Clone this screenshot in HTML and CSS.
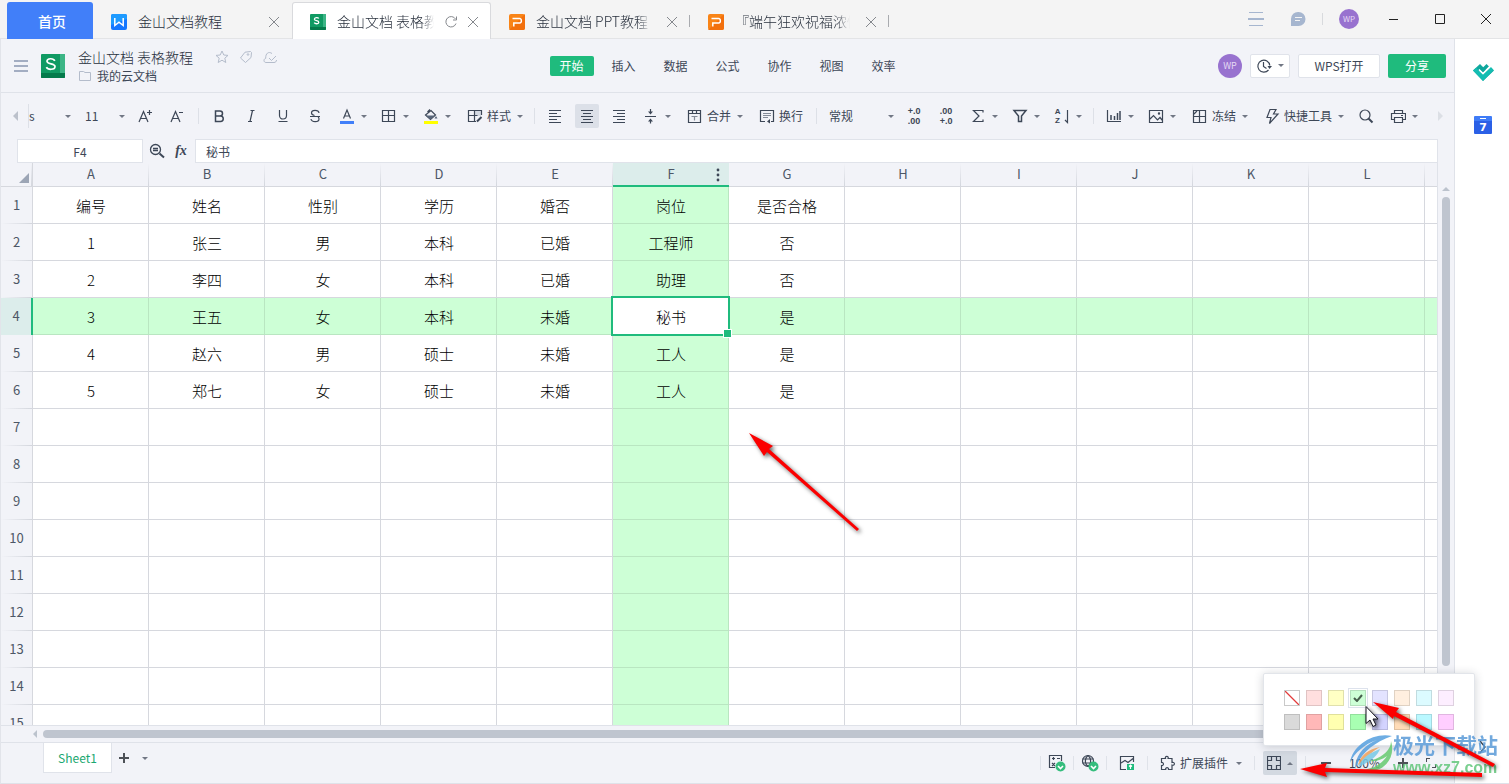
FILE: index.html
```html
<!DOCTYPE html>
<html lang="zh-CN">
<head>
<meta charset="utf-8">
<title>金山文档 表格教程</title>
<link rel="stylesheet" href="styles.css">
</head>
<body>
<header class="tabbar">
  <button class="home">首页</button>
  <nav class="tabs">
    <div class="tab">
      <svg class="logo" viewBox="0 0 16 16"><rect width="16" height="16" rx="2" fill="#1677ff"/><path d="M0 2a2 2 0 0 1 2-2h12a2 2 0 0 1 2 2v3L0 11z" fill="#1e9bff"/><path d="M3.800 4v7.500L8 8.200l4.200 3.300V4" fill="none" stroke="#fff" stroke-width="1.500"/></svg>
      <span class="tab-label">金山文档教程</span>
      <button class="x" aria-label="关闭"><svg viewBox="0 0 10 10"><path d="M0 0l10 10M10 0L0 10"/></svg></button>
    </div>
    <div class="tab active">
      <svg class="logo" viewBox="0 0 16 16"><rect width="16" height="16" rx="1" fill="#109a63"/><path d="M13 0h2a1 1 0 0 1 1 1v12h-3z" fill="#3cb586"/><path d="M0 13h16v2a1 1 0 0 1-1 1H1a1 1 0 0 1-1-1z" fill="#047a4b"/><path d="M8.800 4.500C8 3.300 4.400 3.300 4.400 5.200c0 2 4.400 1 4.400 3 0 2-3.600 2-4.600.5" fill="none" stroke="#fff" stroke-width="1.300"/></svg>
      <span class="tab-label fade">金山文档 表格教程</span>
      <button class="x" aria-label="刷新"><svg class="refresh" viewBox="0 0 12 12"><path d="M11 7.500A5.200 5.200 0 1 1 10.500 3M11.500.5v3.500H8"/></svg></button>
      <button class="x" aria-label="关闭"><svg viewBox="0 0 10 10"><path d="M0 0l10 10M10 0L0 10"/></svg></button>
    </div>
    <div class="tab split">
      <svg class="logo" viewBox="0 0 16 16"><rect width="16" height="16" rx="2" fill="#f98416"/><path d="M0 16L16 0v14a2 2 0 0 1-2 2z" fill="#f2700d"/><path d="M3.500 4.500h7a1.800 1.800 0 0 1 1.800 1.800v1.200a1.500 1.500 0 0 1-1.500 1.500H4.800v3.500" fill="none" stroke="#fff" stroke-width="1.500"/></svg>
      <span class="tab-label fade">金山文档 PPT教程</span>
      <button class="x" aria-label="关闭"><svg viewBox="0 0 10 10"><path d="M0 0l10 10M10 0L0 10"/></svg></button>
    </div>
    <div class="tab split">
      <svg class="logo" viewBox="0 0 16 16"><rect width="16" height="16" rx="2" fill="#f98416"/><path d="M0 16L16 0v14a2 2 0 0 1-2 2z" fill="#f2700d"/><path d="M3.500 4.500h7a1.800 1.800 0 0 1 1.800 1.800v1.200a1.500 1.500 0 0 1-1.500 1.500H4.800v3.500" fill="none" stroke="#fff" stroke-width="1.500"/></svg>
      <span class="tab-label fade">『端午狂欢祝福浓情</span>
      <button class="x" aria-label="关闭"><svg viewBox="0 0 10 10"><path d="M0 0l10 10M10 0L0 10"/></svg></button>
    </div>
  </nav>
  <div class="window-tools">
    <button aria-label="列表"><svg width="16" height="16" viewBox="0 0 16 16" fill="#a6b6cf"><path d="M1 1h14v1H1zM0 7h16v2H0zM1 14h14v1H1z"/></svg></button>
    <button class="chat" aria-label="消息"><svg width="16" height="16" viewBox="0 0 16 16"><path d="M8.500 1a6.700 6.700 0 1 1 0 14H1V8a7 7 0 0 1 7.500-7z" fill="#a6b6cf"/><path d="M5 6.500h7M5 9.500h5" stroke="#f4f4f4"/></svg></button>
    <i class="thin-line"></i>
    <span class="avatar small">WP</span>
    <div class="window-buttons">
      <button aria-label="最小化"><svg width="12" height="12" viewBox="0 0 12 12"><path d="M1 6.500h9"/></svg></button>
      <button aria-label="最大化"><svg width="12" height="12" viewBox="0 0 12 12"><path d="M1.500 1.500h9v9h-9z"/></svg></button>
      <button aria-label="关闭窗口"><svg width="12" height="12" viewBox="0 0 12 12"><path d="M1 1l10 10M11 1L1 11"/></svg></button>
    </div>
  </div>
</header>

<div class="workspace">
<main class="app">
  <div class="doc-header">
    <div class="doc-left">
      <button class="burger" aria-label="菜单"><svg width="14" height="12" viewBox="0 0 14 12" fill="#a3adc2"><path d="M0 0h14v2H0zM0 5h14v2H0zM0 10h14v2H0z"/></svg></button>
      <svg width="24" height="24" viewBox="0 0 24 24"><rect width="24" height="24" rx="1" fill="#109a63"/><path d="M19 0h4a1 1 0 0 1 1 1v19h-5z" fill="#3cb586"/><path d="M0 19h24v4a1 1 0 0 1-1 1H1a1 1 0 0 1-1-1z" fill="#047a4b"/><path d="M13.800 6.800C12.600 4 6 4 6 7.300c0 3.400 8 1.700 8 5.200 0 3.600-7.200 3.600-8.600.6" fill="none" stroke="#fff" stroke-width="1.700"/></svg>
      <div class="doc-names">
        <div class="doc-title"><span>金山文档 表格教程</span>
          <span class="doc-marks">
            <svg width="14" height="14" viewBox="0 0 14 14"><path d="M7 1l1.800 4 4.200.4-3.200 2.800 1 4.300L7 10.200l-3.800 2.300 1-4.300L1 5.400 5.200 5z"/></svg>
            <svg width="14" height="14" viewBox="0 0 14 14"><path d="M1.500 8L6 2.200l5.500-.7 1 1L12 7.500 6.500 12.500z"/><circle cx="9" cy="4.500" r=".8"/></svg>
            <svg width="14" height="14" viewBox="0 0 14 14"><path d="M13.500 10c0 1.500-1 2.500-2.500 2.500H3C.5 12.500.3 9 2.700 8.300 2.500 3.500 5.500 1 9 3.500M6 8l2.500 2.500L13 6"/></svg>
          </span>
        </div>
        <div class="doc-path"><svg width="12" height="12" viewBox="0 0 12 12"><path d="M.5 1.500h4l1.500 1h5.500v8H.5z"/></svg><span>我的云文档</span></div>
      </div>
    </div>
    <nav class="menu">
      <button class="on">开始</button><button>插入</button><button>数据</button><button>公式</button><button>协作</button><button>视图</button><button>效率</button>
    </nav>
    <div class="doc-right">
      <span class="avatar">WP</span>
      <button class="box history" aria-label="历史记录"><svg width="16" height="16" viewBox="0 0 16 16"><path d="M12.500 12A6 6 0 1 1 13.800 7.500M7.500 4v4.500l3 2"/><path d="M11.500 8h4.500l-2.500 3z" fill="#3d4757" stroke="none"/></svg><i class="caret"></i></button>
      <button class="box open">WPS打开</button>
      <button class="share">分享</button>
    </div>
  </div>

  <div class="toolbar">
    <button class="nudge" aria-label="向左"><svg width="5" height="10" viewBox="0 0 5 10"><path d="M5 0v10L0 5z" fill="#bcc1cb"/></svg></button>
    <label class="pick font"><select aria-label="字体"><option>s</option></select><i class="caret"></i></label>
    <label class="pick size"><select aria-label="字号"><option>11</option></select><i class="caret"></i></label>
    <button class="tool" aria-label="增大字号"><svg viewBox="0 0 16 16"><path d="M2 14L6.500 3.500 11 14M3.500 10.500h6M10 4.500h5M12.500 2v5"/></svg></button>
    <button class="tool" aria-label="减小字号"><svg viewBox="0 0 16 16"><path d="M2 14L6.500 3.500 11 14M3.500 10.500h6M10 4.500h4"/></svg></button>
    <i class="sep"></i>
    <button class="tool" aria-label="加粗"><svg viewBox="0 0 16 16"><path d="M4.500 3h4.500a2.300 2.300 0 0 1 0 5H4.500zM4.500 8h5a2.600 2.600 0 0 1 0 5.500h-5z" stroke-width="1.500"/></svg></button>
    <button class="tool" aria-label="斜体"><svg viewBox="0 0 16 16"><path d="M7.500 2.500h4M5 13.500h4M9.500 2.500l-2.500 11"/></svg></button>
    <button class="tool" aria-label="下划线"><svg viewBox="0 0 16 16"><path d="M4.500 2v5.500a3.500 3.500 0 0 0 7 0V2M3.500 13.500h9"/></svg></button>
    <button class="tool" aria-label="删除线"><svg viewBox="0 0 16 16"><path d="M12 5C11.500 1.500 4.500 1.500 4.500 5c0 1.500 1 2 3 2.500M3 8.500h10M4 11c.5 3.500 8 3.500 8 0 0-1-.3-1.600-1-2"/></svg></button>
    <button class="tool" aria-label="字体颜色"><svg viewBox="0 0 16 16"><path d="M4.500 10.500L8 2l3.500 8.500M5.500 8h5"/><path d="M1 13h14v3H1z" fill="#417ff9" stroke="none"/></svg><i class="caret"></i></button>
    <button class="tool" aria-label="边框"><svg viewBox="0 0 16 16"><path d="M1.500 2.500h12v11h-12zM7.500 2.500v11M1.500 7.500h12"/></svg><i class="caret"></i></button>
    <button class="tool" aria-label="填充颜色"><svg viewBox="0 0 16 16"><path d="M2.500 7L8 2.500 12.500 7 7.500 11.500zM4.500 4L7 1.500"/><path d="M3 7.500h9L7.500 11.500zM13 8l1.500 2.500h-3z" fill="#59667a" stroke="none"/><path d="M1 13h14v3H1z" fill="#ffff00" stroke="none"/></svg><i class="caret"></i></button>
    <button class="tool labeled"><svg viewBox="0 0 16 16"><path d="M8 2h6v6H8z" fill="#d5dae3" stroke="none"/><path d="M14.500 7V2.500h-13v11H9M7.500 2.500v11M1.500 7.500h9"/><path d="M10 13.500L14.500 9" stroke-width="2"/></svg>样式<i class="caret"></i></button>
    <i class="sep"></i>
    <button class="tool" aria-label="左对齐"><svg viewBox="0 0 16 16"><path d="M2 2.500h12M2 5.500h8M2 8.500h12M2 11.500h8M2 14.500h12"/></svg></button>
    <button class="tool pressed" aria-label="居中"><svg viewBox="0 0 16 16"><path d="M2 2.500h12M4 5.500h8M2 8.500h12M4 11.500h8M2 14.500h12"/></svg></button>
    <button class="tool" aria-label="右对齐"><svg viewBox="0 0 16 16"><path d="M2 2.500h12M6 5.500h8M2 8.500h12M6 11.500h8M2 14.500h12"/></svg></button>
    <button class="tool" aria-label="垂直对齐"><svg viewBox="0 0 16 16"><path d="M2 8.500h11M7.500 1v4M7.500 12v3.500"/><path d="M5 3.500h5L7.500 6.500zM5 13.500h5L7.500 10.500z" fill="#3d4757" stroke="none"/></svg><i class="caret"></i></button>
    <button class="tool labeled"><svg viewBox="0 0 16 16"><path d="M1.500 2.500h12v12h-12zM1.500 5.500h12M5.500 2.500v3M9.500 2.500v3"/><path d="M4.500 8.500h6M7.500 8.500v4" stroke="#848b98"/></svg>合并<i class="caret"></i></button>
    <button class="tool labeled"><svg viewBox="0 0 16 16"><path d="M6 13.500H1.500v-11h13v11H12"/><path d="M4 5.500h8M4 7.500h8M4 9.500h5" stroke="#848b98"/><path d="M11 11v4.500l-3-2z" fill="#3d4757" stroke="none"/></svg>换行</button>
    <i class="sep"></i>
    <label class="pick number"><select aria-label="数字格式"><option>常规</option></select><i class="caret"></i></label>
    <button class="tool digits" aria-label="增加小数位"><span>+.0</span><span>.00</span></button>
    <button class="tool digits" aria-label="减少小数位"><span>.00</span><span>+.0</span></button>
    <button class="tool" aria-label="求和"><svg viewBox="0 0 16 16"><path d="M13 4.500v-2H3.500L9 8l-5.500 5.500H13v-2"/></svg><i class="caret"></i></button>
    <button class="tool" aria-label="筛选"><svg viewBox="0 0 16 16"><path d="M2 2.500h12L9.500 8v5.500h-3V8z" stroke-width="1.500"/></svg><i class="caret"></i></button>
    <button class="tool sort" aria-label="排序"><span class="az"><span>A</span><span>Z</span></span><svg viewBox="0 0 6 16"><path d="M3.500 2v12.500L1 12"/></svg><i class="caret"></i></button>
    <i class="sep"></i>
    <button class="tool" aria-label="图表"><svg viewBox="0 0 16 16"><path d="M1.500 2v11.500H15"/><path d="M5 7v5M8.500 8v4M11.500 5v7M14 3v9" stroke-width="1.500"/></svg><i class="caret"></i></button>
    <button class="tool" aria-label="图片"><svg viewBox="0 0 16 16"><path d="M1.500 2.500h13v12h-13zM2 11l3.500-3.500 4 4.500 2.500-2.500 2.500 3"/><circle cx="11" cy="5.500" r=".6"/></svg><i class="caret"></i></button>
    <button class="tool labeled"><svg viewBox="0 0 16 16"><path d="M1.500 2.500h12v12h-12zM7.500 2.500v12M1.500 8.500h12M2 6l3-3"/></svg>冻结<i class="caret"></i></button>
    <button class="tool labeled"><svg viewBox="0 0 16 16"><path d="M6 1.500h6L9.500 6H14L5.500 15.500l1.500-6H3z"/></svg>快捷工具<i class="caret"></i></button>
    <button class="tool" aria-label="查找"><svg viewBox="0 0 16 16"><circle cx="7" cy="7" r="5"/><path d="M10.500 10.500l4 4" stroke-width="2"/></svg></button>
    <button class="tool" aria-label="打印"><svg viewBox="0 0 16 16"><path d="M4.500 5.500v-3h8v3M4.500 11.500h-3v-6h14v6h-3M4.500 9.500h8v5h-8zM11 7.500h2"/></svg><i class="caret"></i></button>
    <button class="nudge end" aria-label="向右"><svg width="5" height="10" viewBox="0 0 5 10"><path d="M0 0v10l5-5z" fill="#dcdfe5"/></svg></button>
  </div>

  <div class="formula-bar">
    <input class="name-box" aria-label="名称框" value="F4">
    <button aria-label="浏览"><svg width="16" height="16" viewBox="0 0 16 16" fill="none" stroke="#3d4757" stroke-width="1.300"><circle cx="6.500" cy="6.500" r="5"/><path d="M4 5.500h5M4 7.500h5"/><path d="M10.500 10.500l4.500 4" stroke-width="2"/></svg></button>
    <button class="fx" aria-label="插入函数"><i>fx</i></button>
    <input class="formula" aria-label="编辑栏" value="秘书">
  </div>

  <div class="sheet">
    <div class="grid">
      <table>
        <colgroup><col class="c-index"><col span="13" class="c-data"></colgroup>
        <thead><tr><th class="corner"><svg width="10" height="10" viewBox="0 0 10 10"><path d="M10 0v10H0z" fill="#9ca5b5"/></svg></th><th>A</th><th>B</th><th>C</th><th>D</th><th>E</th><th class="hot">F<svg class="dots" width="4" height="14" viewBox="0 0 4 14" fill="#3d4757"><circle cx="2" cy="2" r="1.400"/><circle cx="2" cy="7" r="1.400"/><circle cx="2" cy="12" r="1.400"/></svg></th><th>G</th><th>H</th><th>I</th><th>J</th><th>K</th><th>L</th><th></th></tr></thead>
        <tbody>
          <tr><th>1</th><td>编号</td><td>姓名</td><td>性别</td><td>学历</td><td>婚否</td><td>岗位</td><td>是否合格</td><td></td><td></td><td></td><td></td><td></td><td></td></tr>
          <tr><th>2</th><td>1</td><td>张三</td><td>男</td><td>本科</td><td>已婚</td><td>工程师</td><td>否</td><td></td><td></td><td></td><td></td><td></td><td></td></tr>
          <tr><th>3</th><td>2</td><td>李四</td><td>女</td><td>本科</td><td>已婚</td><td>助理</td><td>否</td><td></td><td></td><td></td><td></td><td></td><td></td></tr>
          <tr class="current"><th>4</th><td>3</td><td>王五</td><td>女</td><td>本科</td><td>未婚</td><td class="selected">秘书</td><td>是</td><td></td><td></td><td></td><td></td><td></td><td></td></tr>
          <tr><th>5</th><td>4</td><td>赵六</td><td>男</td><td>硕士</td><td>未婚</td><td>工人</td><td>是</td><td></td><td></td><td></td><td></td><td></td><td></td></tr>
          <tr><th>6</th><td>5</td><td>郑七</td><td>女</td><td>硕士</td><td>未婚</td><td>工人</td><td>是</td><td></td><td></td><td></td><td></td><td></td><td></td></tr>
          <tr><th>7</th><td></td><td></td><td></td><td></td><td></td><td></td><td></td><td></td><td></td><td></td><td></td><td></td><td></td></tr>
          <tr><th>8</th><td></td><td></td><td></td><td></td><td></td><td></td><td></td><td></td><td></td><td></td><td></td><td></td><td></td></tr>
          <tr><th>9</th><td></td><td></td><td></td><td></td><td></td><td></td><td></td><td></td><td></td><td></td><td></td><td></td><td></td></tr>
          <tr><th>10</th><td></td><td></td><td></td><td></td><td></td><td></td><td></td><td></td><td></td><td></td><td></td><td></td><td></td></tr>
          <tr><th>11</th><td></td><td></td><td></td><td></td><td></td><td></td><td></td><td></td><td></td><td></td><td></td><td></td><td></td></tr>
          <tr><th>12</th><td></td><td></td><td></td><td></td><td></td><td></td><td></td><td></td><td></td><td></td><td></td><td></td><td></td></tr>
          <tr><th>13</th><td></td><td></td><td></td><td></td><td></td><td></td><td></td><td></td><td></td><td></td><td></td><td></td><td></td></tr>
          <tr><th>14</th><td></td><td></td><td></td><td></td><td></td><td></td><td></td><td></td><td></td><td></td><td></td><td></td><td></td></tr>
          <tr><th>15</th><td></td><td></td><td></td><td></td><td></td><td></td><td></td><td></td><td></td><td></td><td></td><td></td><td></td></tr>
        </tbody>
      </table>
      <svg class="mark mark-column" width="130" height="120" viewBox="740 425 130 120"><path d="M749 433l24 13-4 3 90 80-2 2-90-79-3 4z"/></svg>
    </div>
    <div class="vscroll"><svg width="8" height="4" viewBox="0 0 8 4"><path d="M0 4h8L4 0z" fill="#bcc3cd"/></svg><i></i></div>
  </div>

  <div class="hscroll"><svg width="4" height="8" viewBox="0 0 4 8"><path d="M4 0v8L0 4z" fill="#bcc3cd"/></svg><i></i></div>

  <footer class="footer">
    <button class="sheet-tab">Sheet1</button>
    <button class="add" aria-label="新建工作表"><svg width="10" height="10" viewBox="0 0 10 10"><path d="M4 0h2v10H4zM0 4h10v2H0z" fill="#4d5157"/></svg></button>
    <button class="more" aria-label="更多工作表"><i class="caret"></i></button>
    <div class="status">
      <i class="bar"></i>
      <button class="status-icon" aria-label="校对"><svg viewBox="0 0 18 18"><path d="M7 13.500H1.500v-12h12V7M4 4.500h3M5.500 3v3M9 4.500h3M4 9l3 3M7 9l-3 3"/><circle cx="12.500" cy="12.500" r="5" fill="#35bd7d" stroke="none"/><path d="M10 12l2.500 2.500L15 12" stroke="#fff" stroke-width="1.600"/></svg></button>
      <i class="bar"></i>
      <button class="status-icon" aria-label="网络"><svg viewBox="0 0 18 18"><circle cx="7" cy="7" r="5.500"/><path d="M7 1.500C3.500 4 3.500 10 7 12.500M7 1.500c3.500 2.500 3.500 8.500 0 11M1.500 5h11M1.500 9h11"/><circle cx="12.500" cy="12.500" r="5" fill="#35bd7d" stroke="none"/><path d="M10 12l2.500 2.500L15 12" stroke="#fff" stroke-width="1.600"/></svg></button>
      <i class="bar"></i>
      <button class="status-icon wide" aria-label="图片压缩"><svg viewBox="0 0 18 18"><path d="M8 15.500H2.500v-13h13V8M3 9l4-2.500 3 2 5-4"/><path d="M9 10h7v6H9z" fill="#1fbb7d" stroke="none"/><path d="M12.500 11v4M11 12.500l1.500-1.500 1.500 1.500" stroke="#fff"/></svg></button>
      <i class="bar"></i>
      <button class="plugin"><svg width="16" height="16" viewBox="0 0 16 16"><path d="M1.500 3.500h4c-1-2.800 3.600-2.800 2.600 0h3.900v4c3.200-1 3.200 3.600 0 2.600v4.400H8.500c.6-2.600-3.400-2.600-2.800 0H1.500v-4c2.600.5 2.600-3.500 0-3z"/></svg>扩展插件<i class="caret"></i></button>
      <i class="bar"></i>
      <div class="reading">
        <button class="reading-button" aria-label="阅读模式"><svg width="14" height="14" viewBox="0 0 14 14"><path d="M.5.500h13v13H.5zM.5 4.500h4v-4M9.500.5v4h4M.5 9.500h4v4M9.500 13.500v-4h4"/></svg><i class="caret up"></i></button>
        <div class="palette" role="group" aria-label="高亮颜色">
          <button class="sw none" aria-label="无"></button><button class="sw pink"></button><button class="sw yellow"></button><button class="sw green chosen" aria-label="绿色"><svg width="10" height="8" viewBox="0 0 10 8"><path d="M1 4l3 3 5-6" fill="none" stroke="#47604d" stroke-width="2"/></svg></button><button class="sw violet"></button><button class="sw peach"></button><button class="sw cyan"></button><button class="sw lilac"></button>
          <button class="sw gray"></button><button class="sw pink2"></button><button class="sw yellow2"></button><button class="sw green2"></button><button class="sw violet2"></button><button class="sw peach2"></button><button class="sw cyan2"></button><button class="sw lilac2"></button>
        </div>
      </div>
      <i class="bar"></i>
      <div class="zoom">
        <button aria-label="缩小"><svg width="10" height="10" viewBox="0 0 10 10"><path d="M0 4h10v2H0z"/></svg></button>
        <span>100%</span>
        <button aria-label="放大"><svg width="10" height="10" viewBox="0 0 10 10"><path d="M4 0h2v10H4zM0 4h10v2H0z"/></svg></button>
        <button aria-label="全屏"><svg width="10" height="10" viewBox="0 0 10 10"><path d="M0 0h4v1H1v3H0zM10 10H6V9h3V6h1z"/></svg></button>
      </div>
    </div>
  </footer>
</main>

<aside class="side">
  <button aria-label="待办"><svg width="22" height="20" viewBox="0 0 22 20"><path d="M1 8.500L8 2l6 6-3 3-3-3-1.500 1.500L11 14l8.500-8L22 8.500 11 19z" fill="#0fa79d"/><path d="M1 8.500l3-2.800 7 6.800 8-7.500 2.500 3L11 19z" fill="#14bdb2"/><path d="M11 5.500L14.500 2l2.500 2.500-6 6-2.500-2.500z" fill="#0fa79d"/><path d="M7 7.500l4 4 6.500-6.500" fill="none" stroke="#fff" stroke-width="1.500"/></svg></button>
  <button class="calendar" aria-label="日历">7</button>
  <button class="expand" aria-label="展开"><svg width="8" height="14" viewBox="0 0 8 14"><path d="M1 1l5 6-5 6" fill="none" stroke="#3d4757" stroke-width="1.500"/></svg></button>
</aside>
</div>

<div class="stamp">
  <svg width="44" height="42" viewBox="0 0 44 42"><path d="M43 2C25-2 3 11 1 29c4-10 16-20 27-23C15 11 6 22 6 35c5-14 17-26 37-33z" fill="#559fdf"/><path d="M13 36c18 6 35-10 29-29 0 10-11 18-23 20 7 1 14-1 19-5-5 8-14 13-25 14z" fill="#66ca70"/><path d="M9 31c2-9 10-16 22-18-7 4-13 9-17 16z" fill="#f0a05a"/><path d="M9 33c3-8 11-14 22-18-3 8-12 14-22 18z" fill="#77c9e6"/></svg>
  <div><b>极光下载站</b><span>www.xz7.com</span></div>
</div>
<svg class="mark mark-corner" width="219" height="94" viewBox="1290 690 219 94">
  <path d="M1373 702l26 6-3 4 99 52-2 3-99-51-1 3z"/>
  <path d="M1300 769l27-6-2 5 157 5v4l-157-5 2 5z"/>
  <path class="cursor" d="M1366 706.500v17l4-3.500 3 6.500 3-1.500-3-6h5z"/>
</svg>
</body>
</html>
```
FILE: styles.css
```css
* { box-sizing: border-box; }

body {
  margin: 0;
  height: 100vh;
  display: flex;
  flex-direction: column;
  position: relative;
  overflow: hidden;
  background: #f2f3f8;
  color: #3d4757;
  font: 400 12px/16px "Noto Sans CJK SC", "Noto Sans", sans-serif;
}

button, input, select {
  font: inherit;
  color: inherit;
  border: 0;
  padding: 0;
  margin: 0;
  background: none;
  border-radius: 0;
  appearance: none;
}
button { display: flex; align-items: center; justify-content: center; flex: none; white-space: nowrap; }
svg { display: block; flex: none; }

.caret {
  flex: none;
  width: 0;
  height: 0;
  border: 3px solid transparent;
  border-top-color: #717784;
  border-bottom-width: 0;
}
.caret.up { border-top-width: 0; border-bottom: 3px solid #717784; }

/* window tabs */
.tabbar {
  flex: none;
  display: flex;
  height: 39px;
  padding: 2px 0 0 7px;
  background: #f4f4f4;
  border-bottom: 1px solid #e3e4e6;
}
.home {
  width: 86px;
  height: 37px;
  border-radius: 3px 3px 0 0;
  background: #417ff9;
  color: #fff;
  font-size: 14px;
  font-weight: 500;
  padding-left: 4px;
}
.tabs { display: flex; flex: 1; min-width: 0; }
.tab {
  flex: 0 1 199px;
  min-width: 0;
  height: 37px;
  display: flex;
  align-items: center;
  gap: 11px;
  padding: 2px 13px 0 18px;
  position: relative;
}
.tab.active {
  background: #fff;
  border: 1px solid #d9dadd;
  border-bottom: 0;
  border-radius: 3px 3px 0 0;
  padding: 1px 12px 0 17px;
}
.tab.split::after {
  content: "";
  position: absolute;
  right: 0;
  top: 13px;
  width: 1px;
  height: 12px;
  background: #a9abaf;
}
.logo { width: 16px; height: 16px; }
.tab-label {
  flex: 1;
  min-width: 0;
  overflow: hidden;
  white-space: nowrap;
  font-size: 14px;
  font-weight: 300;
  line-height: 20px;
  color: #28303d;
  margin: 0 5px 2px 0;
}
.active .tab-label { margin-right: 0; }
.fade { mask-image: linear-gradient(to right, #000 88%, transparent); }
.x svg { width: 10px; height: 10px; overflow: visible; fill: none; stroke: #85888d; }
.x .refresh { width: 12px; height: 12px; }

.window-tools { display: flex; align-items: center; height: 33px; }
.chat { margin: 0 16px 0 26px; }
.thin-line { width: 1px; height: 12px; margin-right: 16px; background: #d8dadd; }
.avatar {
  width: 24px;
  height: 24px;
  border-radius: 50%;
  background: #9872cf;
  color: #e4d9f4;
  font-size: 9px;
  line-height: 23px;
  text-align: center;
}
.avatar.small { width: 20px; height: 20px; font-size: 8px; line-height: 19px; margin-right: 12px; }
.window-buttons { display: flex; }
.window-buttons button { width: 46px; height: 33px; }
.window-buttons svg { fill: none; stroke: #222; }

.workspace { flex: 1; min-height: 0; display: flex; }
.app {
  flex: 1;
  min-width: 0;
  display: flex;
  flex-direction: column;
  border-left: 1px solid #e2e4ea;
  position: relative;
  z-index: 1;
}

/* document header */
.doc-header {
  flex: none;
  height: 54px;
  display: grid;
  grid-template-columns: 1fr auto 1fr;
  align-items: center;
  padding: 0 8px 0 13px;
  border-bottom: 1px solid #dfe2e9;
}
.doc-left { display: flex; align-items: center; gap: 13px; }
.doc-names { display: flex; flex-direction: column; gap: 1px; padding-bottom: 1px; }
.doc-title { display: flex; align-items: center; font-size: 14px; line-height: 20px; }
.doc-title > span:first-child { font-weight: 300; color: #28303d; }
.doc-marks { display: flex; gap: 10px; margin-left: 22px; }
.doc-marks svg, .doc-path svg { fill: none; stroke: #b4bccb; }
.doc-path { display: flex; align-items: center; gap: 6px; padding-left: 1px; }
.menu { display: flex; gap: 8px; margin-right: 5px; }
.menu button { width: 44px; height: 20px; border-radius: 2px; }
.menu .on { background: #1fbb7d; color: #fff; }
.doc-right { display: flex; justify-content: flex-end; align-items: center; gap: 8px; }
.box { height: 24px; background: #fff; border: 1px solid #e0e3ea; border-radius: 2px; }
.history { width: 40px; gap: 6px; }
.history svg { fill: none; stroke: #3d4757; stroke-width: 1.2; }
.open { width: 82px; }
.share { width: 58px; height: 24px; border-radius: 2px; background: #1fbb7d; color: #fff; }

/* toolbar */
.toolbar {
  flex: none;
  height: 46px;
  display: flex;
  align-items: center;
  gap: 8px;
  padding: 0 11px 0 12px;
}
.tool { height: 24px; min-width: 24px; padding: 0 4px; gap: 4px; border-radius: 2px; }
.tool svg { width: 16px; height: 16px; fill: none; stroke: #3d4757; stroke-width: 1.2; }
.tool .caret { margin: 0 -2px 0 2px; }
.labeled { margin-left: 2px; }
.pressed { background: #dce0e8; }
.sep { flex: none; width: 1px; height: 16px; margin-left: 1px; background: #dde0e7; }
.pick { display: flex; align-items: center; height: 24px; }
.pick select { flex: 1; min-width: 0; width: 0; height: 24px; }
.font { width: 43px; margin-left: 2px; border-left: 1px solid #dde0e7; }
.size { width: 46px; padding-left: 6px; }
.number { width: 69px; padding-left: 4px; }
.digits { flex-direction: column; padding: 0; gap: 0; font: 700 9px/10px "Liberation Sans", sans-serif; }
.sort { gap: 3px; }
.az { display: flex; flex-direction: column; width: 7px; font: 700 8px/9px "Liberation Sans", sans-serif; }
.sort svg { width: 6px; }
.sort .caret { margin-left: 3px; }
.nudge { height: 24px; }
.nudge.end { margin-left: auto; }

/* formula bar */
.formula-bar { flex: none; height: 24px; display: flex; padding: 0 16px; }
.formula-bar input { height: 24px; background: #fff; border: 1px solid #e0e3ea; }
.name-box { width: 126px; text-align: center; }
.formula-bar button { width: 16px; margin-left: 6px; }
.formula-bar .fx { margin: 0 6px 0 8px; font: italic 700 14px/20px "Liberation Serif", serif; }
.formula-bar .formula { flex: 1; min-width: 0; padding: 0 10px; }

/* grid */
.sheet { flex: 1; min-height: 0; display: flex; }
.grid { flex: 1; min-width: 0; overflow: hidden; position: relative; background: #fff; border-right: 1px solid #dfe2e9; }
table { table-layout: fixed; width: 1540px; border-spacing: 0; color: #000; font-size: 15px; text-align: center; }
.c-index { width: 32px; }
.c-data { width: 116px; }
th, td { padding: 0; border: 0 solid #d6d8de; border-width: 0 1px 1px 0; overflow: hidden; }
td { height: 37px; line-height: 20px; font-weight: 300; padding: 1px 0 0 1px; }
th { font-weight: 400; font-size: 13px; line-height: 20px; color: #4d5766; background: #f2f3f8; padding-bottom: 2px; }
thead th {
  height: 24px;
  border-right: 0;
  background: linear-gradient(to bottom, #f2f3f8, #d3d6dd) right / 1px 100% no-repeat #f2f3f8;
}
tbody th {
  border-bottom: 0;
  background: linear-gradient(to right, #f2f3f8, #d3d6dd) bottom / 100% 1px no-repeat #f2f3f8;
}
thead .corner { border-right: 1px solid #d6d8de; }
.corner svg { margin: 8px 0 0 18px; }
thead .hot { background: #dcedeb; border-bottom: 2px solid #1fbb7d; padding-bottom: 0; position: relative; }
.dots { position: absolute; right: 9px; top: 5px; }
td:nth-child(7), .current td { background: #cdffd6; border-color: #b9e6c1; }
.current th { background: #dcedeb; border-right: 2px solid #1fbb7d; }
.current .selected { background: #fff; position: relative; overflow: visible; }
.selected::before { content: ""; position: absolute; inset: -2px; border: 2px solid #1fbb7d; }
.selected::after {
  content: "";
  position: absolute;
  right: -4px;
  bottom: -4px;
  width: 7px;
  height: 7px;
  background: #1fbb7d;
  border: 1px solid #fff;
}
.vscroll { flex: none; width: 16px; padding: 24px 0 59px 4px; display: flex; flex-direction: column; gap: 6px; }
.vscroll i { flex: 1; width: 8px; border-radius: 4px; background: #bfc5cf; }
.hscroll {
  flex: none;
  height: 17px;
  display: flex;
  align-items: center;
  gap: 6px;
  padding: 0 28px 0 32px;
  border-top: 1px solid #dfe2e9;
}
.hscroll i { flex: 1; height: 8px; border-radius: 4px; background: #bfc5cf; }

/* footer */
.footer {
  flex: none;
  height: 42px;
  display: flex;
  align-items: center;
  padding-left: 42px;
  border: solid #dfe2e9;
  border-width: 1px 0;
}
.sheet-tab {
  align-self: flex-start;
  width: 69px;
  height: 30px;
  background: #fff;
  border: 1px solid #e0e3ea;
  border-top: 0;
  color: #1aa870;
}
.add { margin: 0 13px 10px 7px; }
.more { margin-bottom: 10px; }
.status { display: flex; align-items: center; margin-left: auto; }
.bar { width: 1px; height: 14px; background: #dfe2e9; }
.status svg { fill: none; stroke: #3d4757; stroke-width: 1.2; }
.status-icon { width: 32px; height: 24px; }
.status-icon svg { width: 18px; height: 18px; }
.status-icon.wide { width: 40px; }
.plugin { width: 106px; height: 24px; gap: 4px; }
.plugin .caret { margin-left: 4px; }
.reading { position: relative; margin: 0 8px; }
.reading-button { width: 34px; height: 24px; gap: 6px; border-radius: 2px; background: #d3d9e1; }
.palette {
  position: absolute;
  left: 0;
  bottom: 29px;
  display: grid;
  grid-template-columns: repeat(8, 16px);
  gap: 8px 6px;
  padding: 16px 20px 15px;
  background: #fff;
  border: 1px solid #e2e5ea;
  border-radius: 2px;
  box-shadow: 0 1px 10px rgba(40, 50, 70, .22);
}
.sw { width: 16px; height: 16px; border: 1px solid rgba(0, 0, 0, .12); }
.none { border-color: #c9c9c9; background: linear-gradient(to top right, transparent 46%, #e23b3b 47%, #e23b3b 53%, transparent 54%); }
.pink { background: #ffdfdf; }
.yellow { background: #ffffc4; }
.green { background: #cdffd6; }
.violet { background: #e3e3ff; }
.peach { background: #ffefdf; }
.cyan { background: #dcfbff; }
.lilac { background: #fdeeff; }
.gray { background: #dadada; }
.pink2 { background: #ffb8b8; }
.yellow2 { background: #ffffb0; }
.green2 { background: #a8ffb2; }
.violet2 { background: #d3d3ff; }
.peach2 { background: #ffdcb8; }
.cyan2 { background: #baf8ff; }
.lilac2 { background: #ffceff; }
.chosen { outline: 1px solid #dde2ec; outline-offset: 1px; }
.zoom { display: flex; align-items: center; padding: 0 18px 0 15px; gap: 18px; }
.zoom svg { fill: #4d5157; stroke: none; }

/* right rail */
.side {
  flex: none;
  width: 55px;
  padding: 23px 0 29px 2px;
  display: flex;
  flex-direction: column;
  align-items: center;
  gap: 34px;
  background: #fff;
  border-left: 1px solid #dfe2e9;
  border-bottom: 1px solid #dfe2e9;
}
.calendar {
  width: 18px;
  height: 18px;
  padding-top: 5px;
  border-radius: 1px;
  background: linear-gradient(#fff, #fff) 6px 2px / 6px 1px no-repeat, linear-gradient(#3f7cf7 5px, #2b60e6 5px);
  color: #fff;
  font: 700 11px/12px "DejaVu Sans", sans-serif;
}
.expand { margin-top: auto; }

/* annotations */
.mark { position: absolute; pointer-events: none; fill: #fb0000; filter: drop-shadow(2px 2px 2px rgba(0, 0, 0, .6)); }
.mark-column { left: 739px; top: 262px; }
.mark-corner { right: 0; bottom: 0; z-index: 3; }
.cursor { fill: #fff; stroke: #14141f; }
.stamp {
  position: absolute;
  right: 11px;
  bottom: 7px;
  z-index: 2;
  display: flex;
  align-items: center;
  opacity: .85;
}
.stamp div { display: flex; flex-direction: column; gap: 3px; }
.stamp b { font-size: 21px; line-height: 24px; font-weight: 700; color: #5a9bd8; }
.stamp span { font: 700 16px/18px "Liberation Sans", sans-serif; color: #63c77c; }
```
